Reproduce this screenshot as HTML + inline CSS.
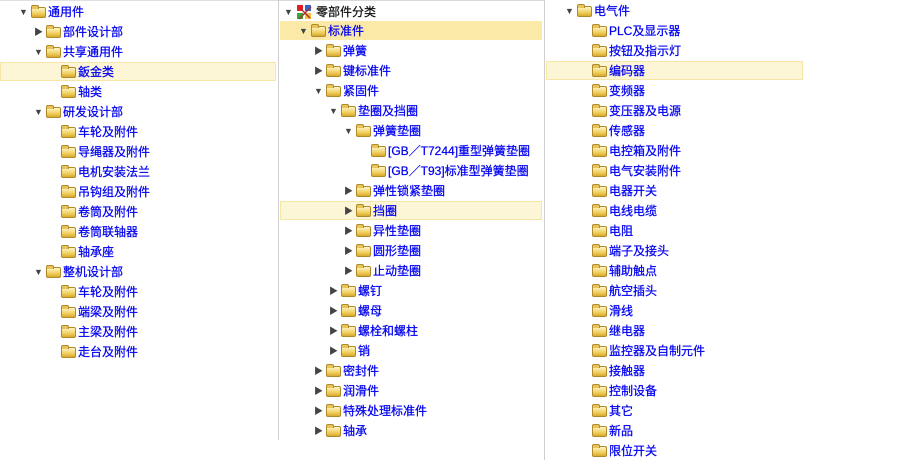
<!DOCTYPE html>
<html><head><meta charset="utf-8"><style>
body{margin:0;width:899px;height:464px;background:#fff;position:relative;overflow:hidden;font-family:"Liberation Sans","Noto Sans CJK SC","WenQuanYi Zen Hei",sans-serif}
.r{position:absolute;height:20px;line-height:20px;font-size:12px;color:#0000f0;white-space:nowrap;display:flex;align-items:center;-webkit-text-stroke:0.25px currentColor}
.a{display:inline-block;width:12px;font-size:9px;color:#444;font-style:normal;text-align:left;-webkit-text-stroke:0}
.f{display:inline-block;width:15px;height:11px;margin:0 2px 0 0;border-radius:2px;background:linear-gradient(#fff6c8,#f0cf60 60%,#d9a92c);border:1px solid #b08a2a;box-sizing:border-box;position:relative;top:0}
.f:before{content:"";position:absolute;left:-1px;top:-3px;width:6px;height:3px;background:#e8c55a;border:1px solid #b08a2a;border-bottom:none;border-radius:2px 2px 0 0}
.hl{position:absolute;height:19px;background:#fdf6d6;border:1px solid #f6e6a8;box-sizing:border-box}
.vl{position:absolute;width:1px;background:#cfcfcf}
</style></head><body>
<div class="vl" style="left:278px;top:0;height:440px"></div>
<div class="vl" style="left:544px;top:0;height:460px"></div>
<div style="position:absolute;left:0;top:0;width:278px;height:1px;background:#e0e0e0"></div>
<div style="position:absolute;left:279px;top:0;width:265px;height:1px;background:#d8d8d8"></div>
<div class="hl" style="left:0;top:62px;width:276px"></div>
<div class="hl" style="left:280px;top:21px;width:262px;background:#fbe9a8;border-color:#fbe9a8"></div>
<div class="hl" style="left:280px;top:201px;width:262px"></div>
<div class="hl" style="left:546px;top:61px;width:257px"></div>

<!-- left -->
<div class="r" style="top:2px;left:19px"><i class="a">▼</i><b class="f"></b>通用件</div>
<div class="r" style="top:22px;left:34px"><i class="a">▶</i><b class="f"></b>部件设计部</div>
<div class="r" style="top:42px;left:34px"><i class="a">▼</i><b class="f"></b>共享通用件</div>
<div class="r" style="top:62px;left:49px"><i class="a"></i><b class="f"></b>鈑金类</div>
<div class="r" style="top:82px;left:49px"><i class="a"></i><b class="f"></b>轴类</div>
<div class="r" style="top:102px;left:34px"><i class="a">▼</i><b class="f"></b>研发设计部</div>
<div class="r" style="top:122px;left:49px"><i class="a"></i><b class="f"></b>车轮及附件</div>
<div class="r" style="top:142px;left:49px"><i class="a"></i><b class="f"></b>导绳器及附件</div>
<div class="r" style="top:162px;left:49px"><i class="a"></i><b class="f"></b>电机安装法兰</div>
<div class="r" style="top:182px;left:49px"><i class="a"></i><b class="f"></b>吊钩组及附件</div>
<div class="r" style="top:202px;left:49px"><i class="a"></i><b class="f"></b>卷筒及附件</div>
<div class="r" style="top:222px;left:49px"><i class="a"></i><b class="f"></b>卷筒联轴器</div>
<div class="r" style="top:242px;left:49px"><i class="a"></i><b class="f"></b>轴承座</div>
<div class="r" style="top:262px;left:34px"><i class="a">▼</i><b class="f"></b>整机设计部</div>
<div class="r" style="top:282px;left:49px"><i class="a"></i><b class="f"></b>车轮及附件</div>
<div class="r" style="top:302px;left:49px"><i class="a"></i><b class="f"></b>端梁及附件</div>
<div class="r" style="top:322px;left:49px"><i class="a"></i><b class="f"></b>主梁及附件</div>
<div class="r" style="top:342px;left:49px"><i class="a"></i><b class="f"></b>走台及附件</div>

<!-- middle -->
<div class="r" style="top:2px;left:284px;color:#111"><i class="a">▼</i><svg width="17" height="16" style="margin-right:3px"><rect x="1" y="1" width="6" height="6" fill="#d22"/><rect x="9" y="1" width="6" height="6" fill="#36c"/><rect x="1" y="9" width="6" height="6" fill="#3a3"/><rect x="9" y="9" width="6" height="6" fill="#fb3"/><path d="M3 15L15 3M5 5L14 14" stroke="#a33" stroke-width="1.5"/></svg>零部件分类</div>
<div class="r" style="top:21px;left:299px"><i class="a">▼</i><b class="f"></b>标准件</div>
<div class="r" style="top:41px;left:314px"><i class="a">▶</i><b class="f"></b>弹簧</div>
<div class="r" style="top:61px;left:314px"><i class="a">▶</i><b class="f"></b>键标准件</div>
<div class="r" style="top:81px;left:314px"><i class="a">▼</i><b class="f"></b>紧固件</div>
<div class="r" style="top:101px;left:329px"><i class="a">▼</i><b class="f"></b>垫圈及挡圈</div>
<div class="r" style="top:121px;left:344px"><i class="a">▼</i><b class="f"></b>弹簧垫圈</div>
<div class="r" style="top:141px;left:359px"><i class="a"></i><b class="f"></b>[GB／T7244]重型弹簧垫圈</div>
<div class="r" style="top:161px;left:359px"><i class="a"></i><b class="f"></b>[GB／T93]标准型弹簧垫圈</div>
<div class="r" style="top:181px;left:344px"><i class="a">▶</i><b class="f"></b>弹性锁紧垫圈</div>
<div class="r" style="top:201px;left:344px"><i class="a">▶</i><b class="f"></b>挡圈</div>
<div class="r" style="top:221px;left:344px"><i class="a">▶</i><b class="f"></b>异性垫圈</div>
<div class="r" style="top:241px;left:344px"><i class="a">▶</i><b class="f"></b>圆形垫圈</div>
<div class="r" style="top:261px;left:344px"><i class="a">▶</i><b class="f"></b>止动垫圈</div>
<div class="r" style="top:281px;left:329px"><i class="a">▶</i><b class="f"></b>螺钉</div>
<div class="r" style="top:301px;left:329px"><i class="a">▶</i><b class="f"></b>螺母</div>
<div class="r" style="top:321px;left:329px"><i class="a">▶</i><b class="f"></b>螺栓和螺柱</div>
<div class="r" style="top:341px;left:329px"><i class="a">▶</i><b class="f"></b>销</div>
<div class="r" style="top:361px;left:314px"><i class="a">▶</i><b class="f"></b>密封件</div>
<div class="r" style="top:381px;left:314px"><i class="a">▶</i><b class="f"></b>润滑件</div>
<div class="r" style="top:401px;left:314px"><i class="a">▶</i><b class="f"></b>特殊处理标准件</div>
<div class="r" style="top:421px;left:314px"><i class="a">▶</i><b class="f"></b>轴承</div>

<!-- right -->
<div class="r" style="top:1px;left:565px"><i class="a">▼</i><b class="f"></b>电气件</div>
<div class="r" style="top:21px;left:580px"><i class="a"></i><b class="f"></b>PLC及显示器</div>
<div class="r" style="top:41px;left:580px"><i class="a"></i><b class="f"></b>按钮及指示灯</div>
<div class="r" style="top:61px;left:580px"><i class="a"></i><b class="f"></b>编码器</div>
<div class="r" style="top:81px;left:580px"><i class="a"></i><b class="f"></b>变频器</div>
<div class="r" style="top:101px;left:580px"><i class="a"></i><b class="f"></b>变压器及电源</div>
<div class="r" style="top:121px;left:580px"><i class="a"></i><b class="f"></b>传感器</div>
<div class="r" style="top:141px;left:580px"><i class="a"></i><b class="f"></b>电控箱及附件</div>
<div class="r" style="top:161px;left:580px"><i class="a"></i><b class="f"></b>电气安装附件</div>
<div class="r" style="top:181px;left:580px"><i class="a"></i><b class="f"></b>电器开关</div>
<div class="r" style="top:201px;left:580px"><i class="a"></i><b class="f"></b>电线电缆</div>
<div class="r" style="top:221px;left:580px"><i class="a"></i><b class="f"></b>电阻</div>
<div class="r" style="top:241px;left:580px"><i class="a"></i><b class="f"></b>端子及接头</div>
<div class="r" style="top:261px;left:580px"><i class="a"></i><b class="f"></b>辅助触点</div>
<div class="r" style="top:281px;left:580px"><i class="a"></i><b class="f"></b>航空插头</div>
<div class="r" style="top:301px;left:580px"><i class="a"></i><b class="f"></b>滑线</div>
<div class="r" style="top:321px;left:580px"><i class="a"></i><b class="f"></b>继电器</div>
<div class="r" style="top:341px;left:580px"><i class="a"></i><b class="f"></b>监控器及自制元件</div>
<div class="r" style="top:361px;left:580px"><i class="a"></i><b class="f"></b>接触器</div>
<div class="r" style="top:381px;left:580px"><i class="a"></i><b class="f"></b>控制设备</div>
<div class="r" style="top:401px;left:580px"><i class="a"></i><b class="f"></b>其它</div>
<div class="r" style="top:421px;left:580px"><i class="a"></i><b class="f"></b>新品</div>
<div class="r" style="top:441px;left:580px"><i class="a"></i><b class="f"></b>限位开关</div>
</body></html>
